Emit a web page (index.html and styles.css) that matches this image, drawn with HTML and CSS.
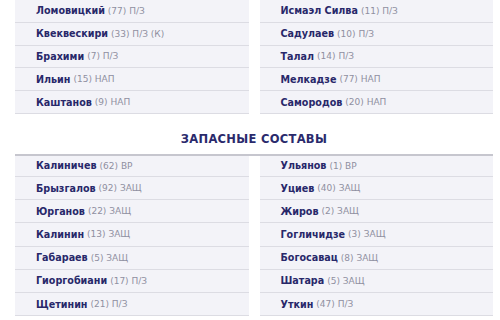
FILE: index.html
```html
<!DOCTYPE html>
<html lang="ru">
<head>
<meta charset="utf-8">
<link rel="stylesheet" href="styles.css">
</head>
<body>
<div class="page">
  <div class="lineup top">
    <ul class="col">
      <li class="row"><b>Ломовицкий</b> <span>(77) П/З</span></li>
      <li class="row"><b>Квеквескири</b> <span>(33) П/З (К)</span></li>
      <li class="row"><b>Брахими</b> <span>(7) П/З</span></li>
      <li class="row"><b>Ильин</b> <span>(15) НАП</span></li>
      <li class="row"><b>Каштанов</b> <span>(9) НАП</span></li>
    </ul>
    <ul class="col">
      <li class="row"><b>Исмаэл Силва</b> <span>(11) П/З</span></li>
      <li class="row"><b>Садулаев</b> <span>(10) П/З</span></li>
      <li class="row"><b>Талал</b> <span>(14) П/З</span></li>
      <li class="row"><b>Мелкадзе</b> <span>(77) НАП</span></li>
      <li class="row"><b>Самородов</b> <span>(20) НАП</span></li>
    </ul>
  </div>
  <h2 class="title">ЗАПАСНЫЕ СОСТАВЫ</h2>
  <div class="lineup bottom">
    <ul class="col">
      <li class="row"><b>Калиничев</b> <span>(62) ВР</span></li>
      <li class="row"><b>Брызгалов</b> <span>(92) ЗАЩ</span></li>
      <li class="row"><b>Юрганов</b> <span>(22) ЗАЩ</span></li>
      <li class="row"><b>Калинин</b> <span>(13) ЗАЩ</span></li>
      <li class="row"><b>Габараев</b> <span>(5) ЗАЩ</span></li>
      <li class="row"><b>Гиоргобиани</b> <span>(17) П/З</span></li>
      <li class="row"><b>Щетинин</b> <span>(21) П/З</span></li>
    </ul>
    <ul class="col">
      <li class="row"><b>Ульянов</b> <span>(1) ВР</span></li>
      <li class="row"><b>Уциев</b> <span>(40) ЗАЩ</span></li>
      <li class="row"><b>Жиров</b> <span>(2) ЗАЩ</span></li>
      <li class="row"><b>Гогличидзе</b> <span>(3) ЗАЩ</span></li>
      <li class="row"><b>Богосавац</b> <span>(8) ЗАЩ</span></li>
      <li class="row"><b>Шатара</b> <span>(5) ЗАЩ</span></li>
      <li class="row"><b>Уткин</b> <span>(47) П/З</span></li>
    </ul>
  </div>
</div>
</body>
</html>
```
FILE: styles.css
```css
html, body {
  margin: 0;
  padding: 0;
  background: #ffffff;
}
.page {
  width: 500px;
  height: 320px;
  overflow: hidden;
  box-sizing: border-box;
  padding: 0 7px 0 15px;
  font-family: "DejaVu Sans", Verdana, sans-serif;
}
.lineup {
  display: grid;
  grid-template-columns: 1fr 1fr;
  column-gap: 11px;
}
.col {
  list-style: none;
  margin: 0;
  padding: 0;
}
.row {
  display: flex;
  align-items: center;
  gap: 3px;
  box-sizing: border-box;
  height: 22.8px;
  padding-left: 21px;
  background: #f3f3f8;
  border-bottom: 1px solid #dcdce3;
  white-space: nowrap;
}
.bottom .row {
  height: 23.2px;
}
.bottom .row:first-child {
  height: 21px;
}
.row b {
  color: #28286a;
  font-weight: 700;
  font-size: 9.6px;
}
.row span {
  color: #8f8fa0;
  font-weight: 400;
  font-size: 9px;
}
.title {
  margin: 16px 0 0;
  height: 18px;
  padding-bottom: 6px;
  display: flex;
  align-items: center;
  justify-content: center;
  font-size: 11.5px;
  font-weight: 700;
  color: #2a2a6c;
  letter-spacing: 0.3px;
  border-bottom: 2px solid #c6c6ce;
}
```
